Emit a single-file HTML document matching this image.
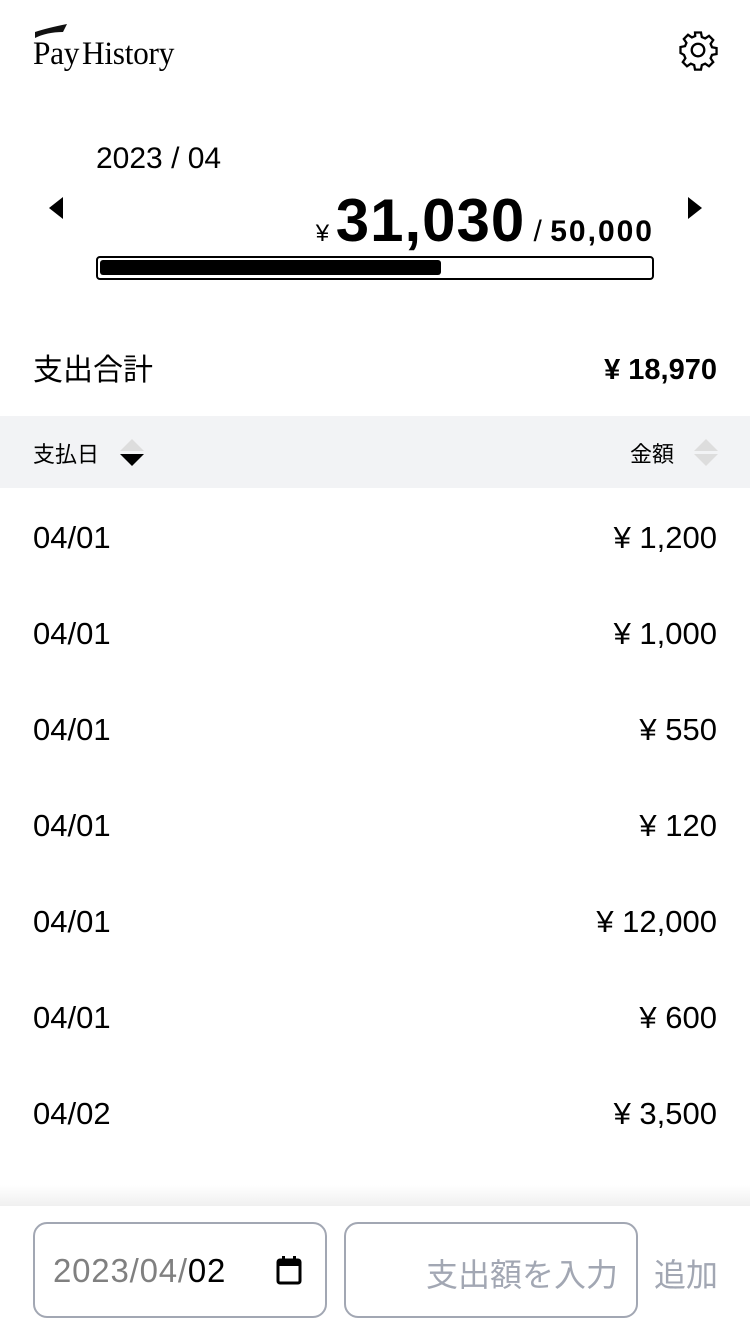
<!DOCTYPE html>
<html><head><meta charset="utf-8"><style>
*{margin:0;padding:0;box-sizing:border-box}
body{width:750px;height:1333px;background:#fff;font-family:"Liberation Sans","Noto Sans CJK JP",sans-serif;color:#000;position:relative;overflow:hidden}
.abs{position:absolute}
.row{position:absolute;left:0;width:750px;height:96px;font-size:31px;line-height:96px}
.row .d{position:absolute;left:33px}
.row .a{position:absolute;right:33px}
</style></head><body>
<div class="abs" style="left:33px;top:22px">
<svg width="36" height="18" style="position:absolute;left:0;top:0"><path d="M2 16 L2 10 Q14 6 34 2 L30 10 Q14 10 2 16Z" fill="#111"/></svg>
<div style="position:absolute;left:0;top:14px;font-family:'Liberation Serif',serif;font-size:33px;letter-spacing:-0.3px;white-space:nowrap;transform:scaleX(0.95);transform-origin:left">Pay<span style="margin-left:3px">History</span></div>
</div>
<svg class="abs" style="left:677px;top:29px" width="42" height="42" viewBox="0 0 24 24" fill="none" stroke="#000" stroke-width="1.3"><path d="M10.3 2h3.4l.5 2.6 1.9.8 2.2-1.5 2.4 2.4-1.5 2.2.8 1.9 2.6.5v3.4l-2.6.5-.8 1.9 1.5 2.2-2.4 2.4-2.2-1.5-1.9.8-.5 2.6h-3.4l-.5-2.6-1.9-.8-2.2 1.5-2.4-2.4 1.5-2.2-.8-1.900L2 13.7v-3.4l2.6-.5.8-1.9-1.5-2.2 2.4-2.4 2.2 1.5 1.9-.8z"/><circle cx="12" cy="12" r="3.6"/></svg>
<div class="abs" style="left:96px;top:142px;font-size:30px">2023 / 04</div>
<svg class="abs" style="left:47px;top:196px" width="18" height="24"><path d="M16 1 L2 12 L16 23Z" fill="#000"/></svg>
<svg class="abs" style="left:686px;top:196px" width="18" height="24"><path d="M2 1 L16 12 L2 23Z" fill="#000"/></svg>
<div class="abs" style="right:96px;top:186px;white-space:nowrap;font-weight:bold"><span style="font-size:24px;font-weight:normal">¥ </span><span style="font-size:60px;letter-spacing:1px">31,030</span><span style="font-size:30px;font-weight:normal"> / </span><span style="font-size:30px;letter-spacing:2px">50,000</span></div>
<div class="abs" style="left:96px;top:256px;width:558px;height:24px;border:2px solid #000;border-radius:4px"></div>
<div class="abs" style="left:100px;top:260px;width:341px;height:15px;background:#000;border-radius:3px"></div>
<div class="abs" style="left:33px;top:345px;font-size:30px">支出合計</div>
<div class="abs" style="right:33px;top:354px;font-size:29px;font-weight:bold">¥ 18,970</div>
<div class="abs" style="left:0;top:416px;width:750px;height:72px;background:#f2f3f5"></div>
<div class="abs" style="left:33px;top:437px;font-size:22px">支払日</div>
<svg class="abs" style="left:119px;top:438px" width="26" height="30"><path d="M1 13 L13 1 L25 13Z" fill="#ddd"/><path d="M1 16 L13 28 L25 16Z" fill="#000"/></svg>
<div class="abs" style="left:630px;top:437px;font-size:22px">金額</div>
<svg class="abs" style="left:693px;top:438px" width="26" height="30"><path d="M1 13 L13 1 L25 13Z" fill="#ddd"/><path d="M1 16 L13 28 L25 16Z" fill="#ddd"/></svg>
<div class="row" style="top:490px"><span class="d">04/01</span><span class="a">¥ 1,200</span></div>
<div class="row" style="top:586px"><span class="d">04/01</span><span class="a">¥ 1,000</span></div>
<div class="row" style="top:682px"><span class="d">04/01</span><span class="a">¥ 550</span></div>
<div class="row" style="top:778px"><span class="d">04/01</span><span class="a">¥ 120</span></div>
<div class="row" style="top:874px"><span class="d">04/01</span><span class="a">¥ 12,000</span></div>
<div class="row" style="top:970px"><span class="d">04/01</span><span class="a">¥ 600</span></div>
<div class="row" style="top:1066px"><span class="d">04/02</span><span class="a">¥ 3,500</span></div>
<div class="abs" style="left:0;top:1185px;width:750px;height:21px;background:linear-gradient(#fff,#f0f0f0)"></div>
<div class="abs" style="left:33px;top:1222px;width:294px;height:96px;border:2px solid #a2a7b3;border-radius:14px"></div>
<div class="abs" style="left:53px;top:1252px;font-size:33px;letter-spacing:0.8px;color:#808080">2023/04/<span style="color:#000">02</span></div>
<svg class="abs" style="left:276px;top:1255px" width="26" height="30"><rect x="2" y="5" width="22" height="23" rx="2" fill="none" stroke="#000" stroke-width="3"/><rect x="2" y="5" width="22" height="6" fill="#000"/><rect x="6" y="1" width="3" height="6" fill="#000"/><rect x="17" y="1" width="3" height="6" fill="#000"/></svg>
<div class="abs" style="left:344px;top:1222px;width:294px;height:96px;border:2px solid #a2a7b3;border-radius:14px"></div>
<div class="abs" style="right:132px;top:1250px;font-size:32px;color:#a2a7b3">支出額を入力</div>
<div class="abs" style="left:654px;top:1250px;font-size:32px;color:#a2a7b3">追加</div>
</body></html>
